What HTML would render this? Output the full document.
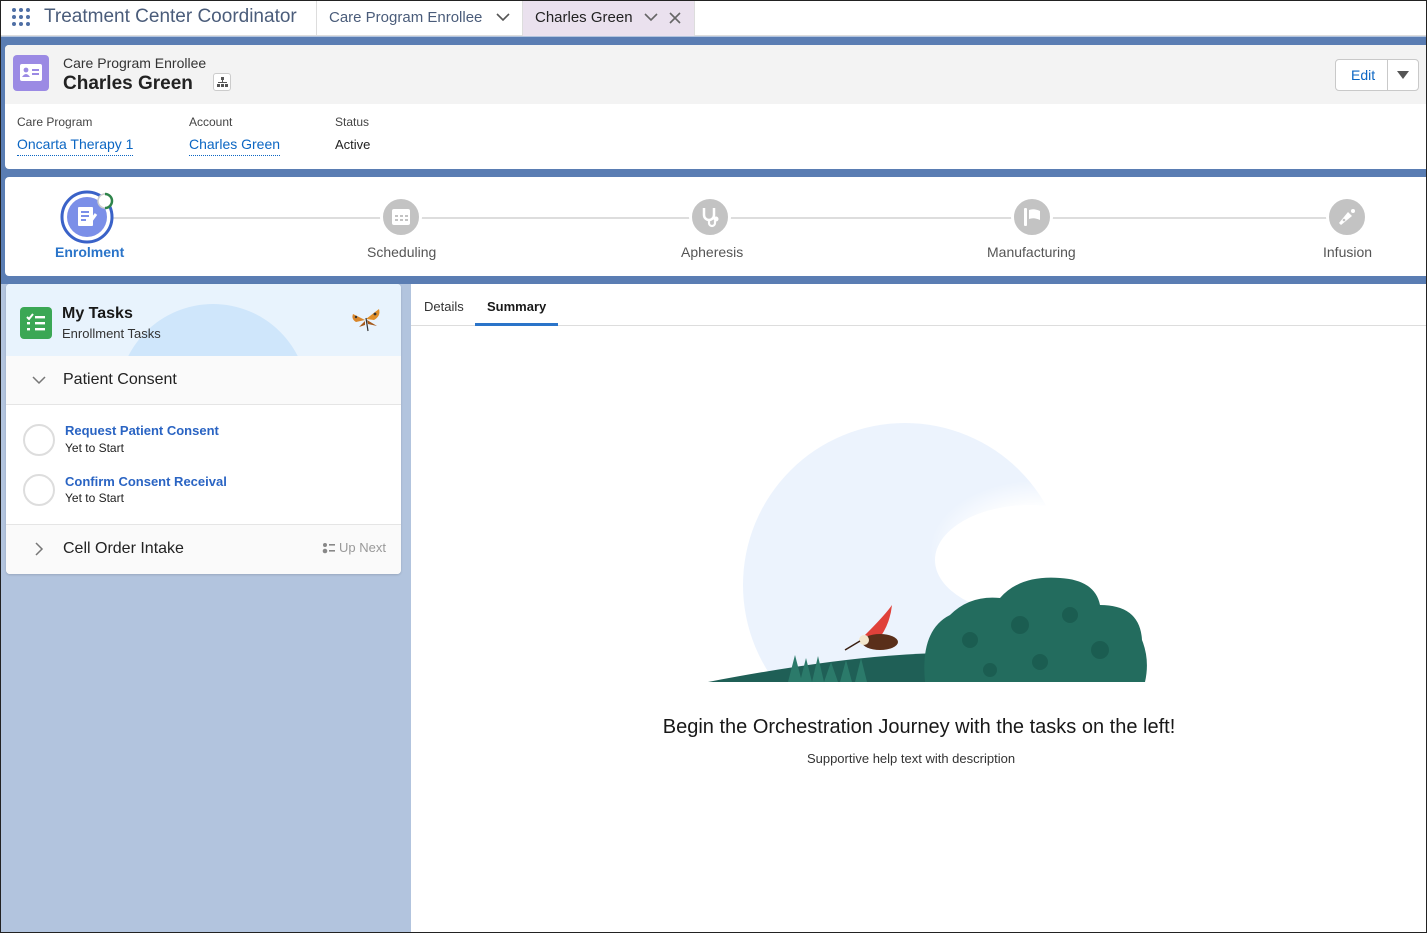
<!DOCTYPE html>
<html><head><meta charset="utf-8"><style>
*{box-sizing:border-box;margin:0;padding:0}
body{width:1427px;height:933px;overflow:hidden;font-family:"Liberation Sans",sans-serif;background:#b2c4de;position:relative;color:#181818}
.abs{position:absolute}
.frame{position:absolute;left:0;top:0;width:1427px;height:933px;border:1px solid #222;pointer-events:none;z-index:10}
.link{color:#0b66c3}
</style></head><body>
<!-- top nav -->
<div class="abs" style="left:0;top:0;width:1427px;height:36px;background:#fff;border-bottom:1px solid #ddd"></div>
<svg class="abs" style="left:11px;top:7px" width="22" height="20"><g fill="#4f6fa5">
<circle cx="3" cy="3" r="2"/><circle cx="10" cy="3" r="2"/><circle cx="17" cy="3" r="2"/>
<circle cx="3" cy="10" r="2"/><circle cx="10" cy="10" r="2"/><circle cx="17" cy="10" r="2"/>
<circle cx="3" cy="17" r="2"/><circle cx="10" cy="17" r="2"/><circle cx="17" cy="17" r="2"/></g></svg>
<div class="abs" style="left:44px;top:6px;font-size:19px;color:#4a5c7a">Treatment Center Coordinator</div>
<div class="abs" style="left:316px;top:0;width:207px;height:36px;border-left:1px solid #ddd;border-right:1px solid #ddd"></div>
<div class="abs" style="left:329px;top:9px;font-size:15px;color:#4a5c7a">Care Program Enrollee</div>
<svg class="abs" style="left:495px;top:11px" width="16" height="12"><path d="M2 3 L8 9 L14 3" stroke="#555" stroke-width="1.6" fill="none"/></svg>
<div class="abs" style="left:523px;top:0;width:172px;height:36px;background:#eae1ee;border-right:1px solid #ddd"></div>
<div class="abs" style="left:535px;top:9px;font-size:15px;color:#222">Charles Green</div>
<svg class="abs" style="left:643px;top:11px" width="16" height="12"><path d="M2 3 L8 9 L14 3" stroke="#666" stroke-width="1.6" fill="none"/></svg>
<svg class="abs" style="left:668px;top:11px" width="14" height="14"><path d="M2 2 L12 12 M12 2 L2 12" stroke="#666" stroke-width="1.6"/></svg>
<!-- blue band -->
<div class="abs" style="left:0;top:37px;width:1427px;height:247px;background:#5a7db3"></div>
<!-- header card -->
<div class="abs" style="left:5px;top:45px;width:1422px;height:124px;background:#fff;border-radius:4px 0 0 4px"></div>
<div class="abs" style="left:5px;top:45px;width:1422px;height:59px;background:#f3f3f3;border-radius:4px 0 0 0"></div>
<div class="abs" style="left:13px;top:55px;width:36px;height:36px;background:#9b8ae4;border-radius:4px"></div>
<svg class="abs" style="left:19px;top:62px" width="24" height="22"><rect x="1" y="2" width="22" height="17" rx="2" fill="#fff"/><circle cx="7" cy="8" r="2.4" fill="#9b8ae4"/><path d="M3 15 Q7 9 11 15Z" fill="#9b8ae4"/><rect x="13" y="7" width="7" height="2" fill="#9b8ae4"/><rect x="13" y="11" width="7" height="2" fill="#9b8ae4"/></svg>
<div class="abs" style="left:63px;top:55px;font-size:14px;color:#333">Care Program Enrollee</div>
<div class="abs" style="left:63px;top:73px;font-size:19px;font-weight:bold;color:#222">Charles Green</div>
<div class="abs" style="left:213px;top:73px;width:18px;height:18px;border:1px solid #ccc;border-radius:3px;background:#fff"></div>
<svg class="abs" style="left:216px;top:76px" width="12" height="12"><g fill="#555"><rect x="5" y="1" width="3" height="3"/><rect x="1" y="8" width="3" height="3"/><rect x="5" y="8" width="3" height="3"/><rect x="9" y="8" width="3" height="3"/><rect x="6" y="4" width="1" height="3"/><rect x="2" y="6" width="9" height="1"/></g></svg>
<div class="abs" style="left:1335px;top:59px;width:84px;height:32px;border:1px solid #c9c9c9;border-radius:4px;background:#fff"></div>
<div class="abs" style="left:1387px;top:59px;width:1px;height:32px;background:#c9c9c9"></div>
<div class="abs link" style="left:1351px;top:67px;font-size:14px">Edit</div>
<svg class="abs" style="left:1396px;top:70px" width="14" height="10"><path d="M1 1 L13 1 L7 9Z" fill="#555"/></svg>
<div class="abs" style="left:17px;top:115px;font-size:12px;color:#444">Care Program</div>
<div class="abs link" style="left:17px;top:136px;font-size:14px;border-bottom:1px dotted #0b66c3;padding-bottom:3px">Oncarta Therapy 1</div>
<div class="abs" style="left:189px;top:115px;font-size:12px;color:#444">Account</div>
<div class="abs link" style="left:189px;top:136px;font-size:14px;border-bottom:1px dotted #0b66c3;padding-bottom:3px">Charles Green</div>
<div class="abs" style="left:335px;top:115px;font-size:12px;color:#444">Status</div>
<div class="abs" style="left:335px;top:137px;font-size:13px;color:#222">Active</div>
<!-- path card -->
<div class="abs" style="left:5px;top:177px;width:1422px;height:99px;background:#fff;border-radius:4px 0 0 4px"></div>
<div class="abs" style="left:110px;top:217px;width:1240px;height:2px;background:#ddd"></div>
<svg class="abs" style="left:58px;top:189px" width="58" height="56"><circle cx="29" cy="28" r="25" fill="#fff" stroke="#3a62c8" stroke-width="3"/><circle cx="29" cy="28" r="20" fill="#7b8fe8"/><rect x="20" y="18" width="15" height="19" rx="1" fill="#fff"/><g stroke="#7b8fe8" stroke-width="2"><path d="M23 23h8M23 27h8M23 31h5"/></g><path d="M30 36 L38 25" stroke="#fff" stroke-width="3"/><circle cx="47" cy="12" r="7" fill="#fff"/><path d="M47 5 A7 7 0 0 1 47 19" stroke="#2e844a" stroke-width="2.5" fill="none"/><path d="M47 19 A7 7 0 0 1 47 5" stroke="#ccc" stroke-width="1.5" fill="none"/></svg>
<div class="abs" style="left:55px;top:244px;font-size:14px;font-weight:bold;color:#2a74c9">Enrolment</div>
<div class="abs" style="left:380px;top:196px;width:42px;height:42px;border-radius:50%;background:#c3c3c3;border:3px solid #fff"></div>
<svg class="abs" style="left:390px;top:205px" width="22" height="22"><rect x="2" y="4" width="18" height="16" rx="2" fill="#fff"/><g fill="#c3c3c3"><rect x="5" y="10" width="3" height="2"/><rect x="10" y="10" width="3" height="2"/><rect x="15" y="10" width="3" height="2"/><rect x="5" y="14" width="3" height="2"/><rect x="10" y="14" width="3" height="2"/><rect x="15" y="14" width="3" height="2"/></g></svg>
<div class="abs" style="left:367px;top:244px;font-size:14px;color:#555">Scheduling</div>
<div class="abs" style="left:689px;top:196px;width:42px;height:42px;border-radius:50%;background:#c3c3c3;border:3px solid #fff"></div>
<svg class="abs" style="left:697px;top:204px" width="26" height="26"><path d="M7 4 V11 A5 5 0 0 0 17 11 V4" stroke="#fff" stroke-width="2.5" fill="none"/><path d="M12 16 V19 A3 3 0 0 0 18 19 V17" stroke="#fff" stroke-width="2.2" fill="none"/><circle cx="19" cy="15" r="2.5" fill="#fff"/></svg>
<div class="abs" style="left:681px;top:244px;font-size:14px;color:#555">Apheresis</div>
<div class="abs" style="left:1011px;top:196px;width:42px;height:42px;border-radius:50%;background:#c3c3c3;border:3px solid #fff"></div>
<svg class="abs" style="left:1020px;top:205px" width="24" height="24"><rect x="4" y="3" width="3" height="18" rx="1" fill="#fff"/><path d="M9 5 Q14 3 20 6 V15 Q14 12 9 14Z" fill="#fff"/></svg>
<div class="abs" style="left:987px;top:244px;font-size:14px;color:#555">Manufacturing</div>
<div class="abs" style="left:1326px;top:196px;width:42px;height:42px;border-radius:50%;background:#c3c3c3;border:3px solid #fff"></div>
<svg class="abs" style="left:1335px;top:205px" width="24" height="24"><path d="M6 20 L4 18 L13 7 L17 11Z" fill="#fff"/><circle cx="18" cy="6" r="2" fill="#fff"/><circle cx="9" cy="15" r="1.3" fill="#c3c3c3"/></svg>
<div class="abs" style="left:1323px;top:244px;font-size:14px;color:#555">Infusion</div>
<!-- left card -->
<div class="abs" style="left:6px;top:284px;width:395px;height:290px;background:#fff;border-radius:4px;overflow:hidden;box-shadow:0 1px 2px rgba(0,0,0,.15)">
 <div class="abs" style="left:0;top:0;width:395px;height:72px;background:#e8f3fd;overflow:hidden">
  <div class="abs" style="left:112px;top:20px;width:190px;height:190px;border-radius:50%;background:#cfe6fb"></div>
 </div>
 <div class="abs" style="left:0;top:72px;width:395px;height:49px;background:#fafafa;border-bottom:1px solid #e5e5e5"></div>
 <div class="abs" style="left:0;top:240px;width:395px;height:50px;background:#fafafa;border-top:1px solid #e5e5e5"></div>
</div>
<div class="abs" style="left:20px;top:307px;width:32px;height:32px;border-radius:4px;background:#3ba755"></div>
<svg class="abs" style="left:24px;top:311px" width="24" height="24"><path d="M3 6 L5 8 L9 3" stroke="#fff" stroke-width="2" fill="none"/><g fill="#fff"><rect x="11" y="5" width="10" height="2.4"/><rect x="11" y="11" width="10" height="2.4"/><rect x="11" y="17" width="10" height="2.4"/><rect x="3" y="11" width="3" height="2.4"/><rect x="3" y="17" width="3" height="2.4"/></g></svg>
<div class="abs" style="left:62px;top:305px;font-size:16px;font-weight:bold;color:#181818">My Tasks</div>
<div class="abs" style="left:62px;top:326px;font-size:13px;color:#333">Enrollment Tasks</div>
<svg class="abs" style="left:350px;top:306px" width="32" height="26"><path d="M15 14 L3 8 Q1 13 6 16Z" fill="#d9862a"/><path d="M16 13 L29 3 Q31 10 24 14Z" fill="#e08f2a"/><path d="M15 15 L9 21 L15 19Z" fill="#a55a1c"/><path d="M17 14 L27 20 L18 18Z" fill="#a55a1c"/><circle cx="6" cy="11" r="1.2" fill="#333"/><circle cx="25" cy="8" r="1.4" fill="#333"/><path d="M16 12 L18 25" stroke="#333" stroke-width="1.2"/></svg>
<svg class="abs" style="left:31px;top:374px" width="16" height="12"><path d="M2 3 L8 9 L14 3" stroke="#777" stroke-width="1.5" fill="none"/></svg>
<div class="abs" style="left:63px;top:371px;font-size:16px;color:#222">Patient Consent</div>
<div class="abs" style="left:23px;top:424px;width:32px;height:32px;border-radius:50%;border:2px solid #ddd"></div>
<div class="abs" style="left:65px;top:423px;font-size:13px;font-weight:bold;color:#2a64c3">Request Patient Consent</div>
<div class="abs" style="left:65px;top:441px;font-size:12px;color:#222">Yet to Start</div>
<div class="abs" style="left:23px;top:474px;width:32px;height:32px;border-radius:50%;border:2px solid #ddd"></div>
<div class="abs" style="left:65px;top:474px;font-size:13px;font-weight:bold;color:#2a64c3">Confirm Consent Receival</div>
<div class="abs" style="left:65px;top:491px;font-size:12px;color:#222">Yet to Start</div>
<svg class="abs" style="left:33px;top:541px" width="12" height="16"><path d="M3 2 L9 8 L3 14" stroke="#777" stroke-width="1.5" fill="none"/></svg>
<div class="abs" style="left:63px;top:540px;font-size:16px;color:#222">Cell Order Intake</div>
<svg class="abs" style="left:322px;top:542px" width="14" height="12"><circle cx="3" cy="3" r="2" fill="#888"/><circle cx="3" cy="9" r="2.3" fill="#888"/><rect x="7" y="2" width="6" height="1.6" fill="#888"/><rect x="7" y="8" width="6" height="1.6" fill="#888"/></svg>
<div class="abs" style="left:339px;top:540px;font-size:13px;color:#999">Up Next</div>
<!-- right panel -->
<div class="abs" style="left:411px;top:284px;width:1016px;height:649px;background:#fff"></div>
<div class="abs" style="left:411px;top:325px;width:1016px;height:1px;background:#ddd"></div>
<div class="abs" style="left:424px;top:299px;font-size:13px;color:#333">Details</div>
<div class="abs" style="left:487px;top:299px;font-size:13px;font-weight:bold;color:#181818">Summary</div>
<div class="abs" style="left:475px;top:323px;width:83px;height:3px;background:#2a74c9"></div>
<svg class="abs" style="left:700px;top:400px" width="480" height="282">
<defs><radialGradient id="cl" cx="0.5" cy="0.5" r="0.5"><stop offset="0.6" stop-color="#fff"/><stop offset="1" stop-color="#fff" stop-opacity="0"/></radialGradient></defs>
<circle cx="205" cy="185" r="162" fill="#ecf3fd"/>
<ellipse cx="340" cy="150" rx="110" ry="70" fill="url(#cl)"/>
<ellipse cx="330" cy="160" rx="95" ry="55" fill="#fff"/>
<path d="M8 282 Q200 245 300 255 L300 282Z" fill="#1f5f56"/>
<g fill="#2b7a6a"><path d="M88 282 L95 255 L102 282Z M100 282 L106 258 L112 282Z M112 282 L118 256 L124 282Z M124 282 L131 262 L138 282Z M140 282 L146 260 L152 282Z M155 282 L161 258 L167 282Z"/></g>
<path d="M225 282 Q220 230 250 215 Q270 195 300 198 Q320 175 360 178 Q395 180 400 205 Q440 205 442 240 Q450 260 445 282Z" fill="#236c5e"/>
<g fill="#1a5a4e" opacity=".8"><circle cx="270" cy="240" r="8"/><circle cx="320" cy="225" r="9"/><circle cx="370" cy="215" r="8"/><circle cx="400" cy="250" r="9"/><circle cx="340" cy="262" r="8"/><circle cx="290" cy="270" r="7"/></g>
<path d="M165 235 Q185 215 192 205 Q190 225 178 240Z" fill="#e0413a"/>
<ellipse cx="180" cy="242" rx="18" ry="8" fill="#5a2f1a"/>
<circle cx="164" cy="240" r="5" fill="#f3e6cc"/>
<path d="M160 241 L145 250" stroke="#3a1f12" stroke-width="1.5"/>
</svg>
<div class="abs" style="left:411px;top:716px;width:1016px;text-align:center;font-size:20px;color:#181818">Begin the Orchestration Journey with the tasks on the left!</div>
<div class="abs" style="left:411px;top:751px;width:1000px;text-align:center;font-size:13px;color:#333">Supportive help text with description</div>
<div class="frame"></div>
</body></html>
